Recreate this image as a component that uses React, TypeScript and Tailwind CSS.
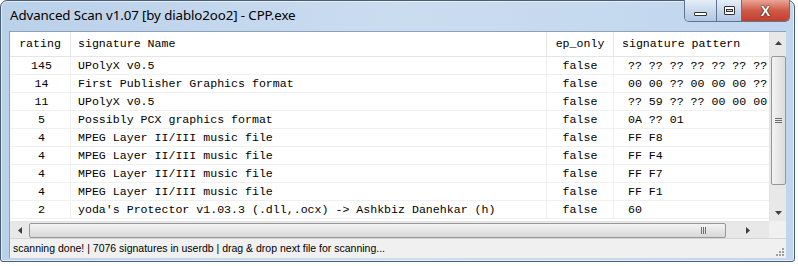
import React from 'react';

type Row = { rating: number; name: string; ep: string; pattern: string };

const rows: Row[] = [
  { rating: 145, name: 'UPolyX v0.5', ep: 'false', pattern: '?? ?? ?? ?? ?? ?? ??' },
  { rating: 14, name: 'First Publisher Graphics format', ep: 'false', pattern: '00 00 ?? 00 00 00 ??' },
  { rating: 11, name: 'UPolyX v0.5', ep: 'false', pattern: '?? 59 ?? ?? 00 00 00' },
  { rating: 5, name: 'Possibly PCX graphics format', ep: 'false', pattern: '0A ?? 01' },
  { rating: 4, name: 'MPEG Layer II/III music file', ep: 'false', pattern: 'FF F8' },
  { rating: 4, name: 'MPEG Layer II/III music file', ep: 'false', pattern: 'FF F4' },
  { rating: 4, name: 'MPEG Layer II/III music file', ep: 'false', pattern: 'FF F7' },
  { rating: 4, name: 'MPEG Layer II/III music file', ep: 'false', pattern: 'FF F1' },
  { rating: 2, name: "yoda's Protector v1.03.3 (.dll,.ocx) -> Ashkbiz Danehkar (h)", ep: 'false', pattern: '60' },
];

const mono = "font-['Liberation_Mono','Courier_New',monospace] text-[11.6px] text-black";

function Arrow({ dir }: { dir: 'up' | 'down' | 'left' | 'right' }) {
  const pts = {
    up: '0,4 3.5,0 7,4',
    down: '0,0 3.5,4 7,0',
    left: '4,0 0,3.5 4,7',
    right: '0,0 4,3.5 0,7',
  }[dir];
  const vertical = dir === 'up' || dir === 'down';
  return (
    <svg width={vertical ? 7 : 4} height={vertical ? 4 : 7} viewBox={vertical ? '0 0 7 4' : '0 0 4 7'}>
      <polygon points={pts} fill="#404040" />
    </svg>
  );
}

function Grip({ vertical }: { vertical: boolean }) {
  return (
    <div className={`flex ${vertical ? 'flex-col' : 'flex-row'} gap-[1px]`}>
      {[0, 1, 2].map((i) => (
        <div key={i} className={vertical ? 'h-[1px] w-[7px] bg-[#6e6e6e]' : 'w-[1px] h-[7px] bg-[#6e6e6e]'} />
      ))}
    </div>
  );
}

export default function App() {
  return (
    <div className="w-[798px] h-[266px] bg-white">
      <div className="w-[795px] h-[262px] flex flex-col rounded-t-[7px] rounded-b-[3px] border border-[#4a5d78] bg-gradient-to-r from-[#bad1ea] via-[#cadcf0] to-[#c0d6ee] shadow-[inset_0_0_0_1px_rgba(255,255,255,0.6)]">
        {/* title bar */}
        <div className="h-[30px] flex items-start justify-between">
          <div className="pl-[9px] pt-[4px] font-['Noto_Sans','Open_Sans',sans-serif] text-[13.3px] text-black leading-[21px] tracking-[-0.1px]">
            Advanced Scan v1.07 [by diablo2oo2] - CPP.exe
          </div>
          <div className="flex mr-[4px] -mt-[1px] h-[22px] rounded-b-[5px] border border-t-0 border-[#5f7290] overflow-hidden">
            <div className="w-[32px] flex items-center justify-center bg-gradient-to-b from-[#e6eef8] via-[#c9d9ed] to-[#b1c6e1] border-r border-[#5f7290]">
              <div className="mt-[6px] w-[13px] h-[4px] border border-[#333] bg-white rounded-[1px]" />
            </div>
            <div className="w-[25px] flex items-center justify-center bg-gradient-to-b from-[#e6eef8] via-[#c9d9ed] to-[#b1c6e1] border-r border-[#5f7290]">
              <div className="w-[11px] h-[9px] border border-[#333] bg-white rounded-[1px] flex items-center justify-center">
                <div className="w-[7px] h-[3px] border border-[#333] bg-[#cfdcec]" />
              </div>
            </div>
            <div className="w-[47px] flex items-center justify-center bg-gradient-to-b from-[#e9a596] via-[#cf5a48] to-[#c43d2b]">
              <span className="font-['Liberation_Sans',sans-serif] font-bold text-[14px] text-white leading-none [text-shadow:0_0_1px_#000,0_0_2px_#333]">
                X
              </span>
            </div>
          </div>
        </div>

        {/* client area */}
        <div className="mx-[8px] h-[227px] flex flex-col bg-[#f0f0f0] border-t border-l border-[#8fa1b9]">
          {/* list view */}
          <div className="h-[206px] flex flex-col bg-white">
            <div className="flex h-[189px]">
              <div className="flex-1 overflow-hidden">
                {/* header */}
                <div className={`flex h-[25px] items-center border-b border-[#e5e5e5] bg-white ${mono}`}>
                  <div className="w-[61px] shrink-0 h-full flex items-center justify-center border-r border-[#e5e5e5]">rating</div>
                  <div className="w-[476px] shrink-0 h-full flex items-center pl-[7px] border-r border-[#e5e5e5]">signature Name</div>
                  <div className="w-[67px] shrink-0 h-full flex items-center justify-center border-r border-[#e5e5e5]">ep_only</div>
                  <div className="w-[155px] shrink-0 h-full flex items-center pl-[8px] whitespace-nowrap">signature pattern</div>
                </div>
                {rows.map((r, i) => (
                  <div key={i} className={`flex h-[18px] items-center border-b border-[#f0f0f0] ${mono}`}>
                    <div className="w-[61px] shrink-0 h-full flex items-center justify-center pl-[3px] border-r border-[#f0f0f0]">{r.rating}</div>
                    <div className="w-[476px] shrink-0 h-full flex items-center pl-[7px] border-r border-[#f0f0f0] whitespace-pre">{r.name}</div>
                    <div className="w-[67px] shrink-0 h-full flex items-center justify-center border-r border-[#f0f0f0]">{r.ep}</div>
                    <div className="w-[155px] shrink-0 h-full flex items-center pl-[14px] whitespace-pre">{r.pattern}</div>
                  </div>
                ))}
              </div>
              {/* vertical scrollbar */}
              <div className="w-[17px] flex flex-col items-center bg-[#e8e8e8] border-l border-[#e3e3e3]">
                <div className="h-[22px] flex items-center justify-center">
                  <Arrow dir="up" />
                </div>
                <div className="w-[15px] h-[129px] mt-[2px] rounded-[2px] border border-[#979797] bg-gradient-to-r from-[#f3f3f3] to-[#dcdcdc] flex items-center justify-center">
                  <Grip vertical />
                </div>
                <div className="flex-1" />
                <div className="h-[17px] flex items-center justify-center">
                  <Arrow dir="down" />
                </div>
              </div>
            </div>
            {/* horizontal scrollbar */}
            <div className="flex h-[17px]">
              <div className="flex-1 flex items-center bg-[#e8e8e8] border-t border-[#e3e3e3]">
                <div className="w-[19px] flex items-center justify-center">
                  <Arrow dir="left" />
                </div>
                <div className="w-[697px] h-[15px] rounded-[2px] border border-[#979797] bg-gradient-to-b from-[#f3f3f3] to-[#d8d8d8] flex items-center justify-end pr-[19px]">
                  <Grip vertical={false} />
                </div>
                <div className="flex-1 flex items-center justify-center">
                  <Arrow dir="right" />
                </div>
              </div>
              <div className="w-[17px] bg-[#f0f0f0]" />
            </div>
          </div>
          {/* status bar */}
          <div className="flex-1 flex items-center justify-between pl-[3px] border-t border-[#d5d5d5] font-['Liberation_Sans',Arial,sans-serif] text-[10.5px] text-black">
            <span>scanning done! | 7076 signatures in userdb | drag &amp; drop next file for scanning...</span>
            <svg width="10" height="10" viewBox="0 0 10 10" className="self-end mb-[2px] mr-[2px]">
              {[
                [8, 8], [5, 8], [2, 8], [8, 5], [5, 5], [8, 2],
              ].map(([x, y], i) => (
                <rect key={i} x={x} y={y} width="2" height="2" fill="#a0a0a0" />
              ))}
            </svg>
          </div>
        </div>
      </div>
    </div>
  );
}
